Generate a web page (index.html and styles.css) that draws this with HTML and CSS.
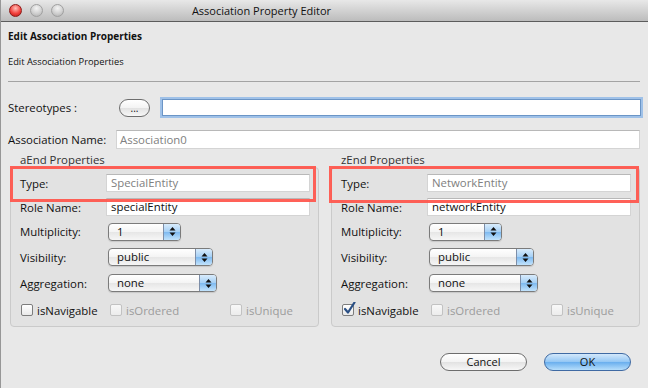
FILE: index.html
```html
<!DOCTYPE html>
<html lang="en">
<head>
    <meta charset="UTF-8">
    <meta name="viewport" content="width=device-width, initial-scale=1.0">
    <title>Association Property Editor</title>
    <link rel="stylesheet" href="styles.css">
</head>
<body>
    <div class="window">
        <div class="titlebar">
            <div class="lights">
                <span class="light close"></span>
                <span class="light"></span>
                <span class="light"></span>
            </div>
            <div class="title">Association Property Editor</div>
        </div>

        <div class="main">
            <div class="head-title">Edit Association Properties</div>
            <div class="head-sub">Edit Association Properties</div>
            <div class="sep"></div>

            <div class="row stereo">
                <label class="lbl-stereo">Stereotypes :</label>
                <button class="btn-dots">...</button>
                <div class="field focus"></div>
            </div>

            <div class="row assoc">
                <label class="lbl-assoc">Association Name:</label>
                <div class="field muted">Association0</div>
            </div>

            <div class="panel-titles">
                <div>aEnd Properties</div>
                <div>zEnd Properties</div>
            </div>

            <div class="panels">
                <!-- aEnd -->
                <div class="panel">
                    <div class="prow">
                        <label>Type:</label>
                        <div class="field pfield muted">SpecialEntity</div>
                    </div>
                    <div class="prow">
                        <label>Role Name:</label>
                        <div class="field pfield">specialEntity</div>
                    </div>
                    <div class="prow mid">
                        <label>Multiplicity:</label>
                        <div class="select w-mult"><span class="val">1</span><span class="arr"><svg width="7" height="11" viewBox="0 0 7 11"><path d="M3.5 1 L6.5 4.5 L0.5 4.5 Z M3.5 10 L6.5 6.5 L0.5 6.5 Z" fill="#111"/></svg></span></div>
                    </div>
                    <div class="prow tall">
                        <label>Visibility:</label>
                        <div class="select w-vis"><span class="val">public</span><span class="arr"><svg width="7" height="11" viewBox="0 0 7 11"><path d="M3.5 1 L6.5 4.5 L0.5 4.5 Z M3.5 10 L6.5 6.5 L0.5 6.5 Z" fill="#111"/></svg></span></div>
                    </div>
                    <div class="prow tall">
                        <label>Aggregation:</label>
                        <div class="select w-agg"><span class="val">none</span><span class="arr"><svg width="7" height="11" viewBox="0 0 7 11"><path d="M3.5 1 L6.5 4.5 L0.5 4.5 Z M3.5 10 L6.5 6.5 L0.5 6.5 Z" fill="#111"/></svg></span></div>
                    </div>
                    <div class="prow checks">
                        <div class="chk c1"><span class="box"></span>isNavigable</div>
                        <div class="chk c2 off"><span class="box"></span>isOrdered</div>
                        <div class="chk off"><span class="box"></span>isUnique</div>
                    </div>
                </div>

                <!-- zEnd -->
                <div class="panel">
                    <div class="prow">
                        <label>Type:</label>
                        <div class="field pfield muted">NetworkEntity</div>
                    </div>
                    <div class="prow">
                        <label>Role Name:</label>
                        <div class="field pfield">networkEntity</div>
                    </div>
                    <div class="prow mid">
                        <label>Multiplicity:</label>
                        <div class="select w-mult"><span class="val">1</span><span class="arr"><svg width="7" height="11" viewBox="0 0 7 11"><path d="M3.5 1 L6.5 4.5 L0.5 4.5 Z M3.5 10 L6.5 6.5 L0.5 6.5 Z" fill="#111"/></svg></span></div>
                    </div>
                    <div class="prow tall">
                        <label>Visibility:</label>
                        <div class="select w-vis"><span class="val">public</span><span class="arr"><svg width="7" height="11" viewBox="0 0 7 11"><path d="M3.5 1 L6.5 4.5 L0.5 4.5 Z M3.5 10 L6.5 6.5 L0.5 6.5 Z" fill="#111"/></svg></span></div>
                    </div>
                    <div class="prow tall">
                        <label>Aggregation:</label>
                        <div class="select w-agg"><span class="val">none</span><span class="arr"><svg width="7" height="11" viewBox="0 0 7 11"><path d="M3.5 1 L6.5 4.5 L0.5 4.5 Z M3.5 10 L6.5 6.5 L0.5 6.5 Z" fill="#111"/></svg></span></div>
                    </div>
                    <div class="prow checks">
                        <div class="chk c1"><span class="box checked"><svg width="14" height="14" viewBox="0 0 14 14"><path d="M3 7 L6 10.5 L12.5 0.5" fill="none" stroke="#2a4f84" stroke-width="2.2" stroke-linecap="round" stroke-linejoin="round"/></svg></span>isNavigable</div>
                        <div class="chk c2 off"><span class="box"></span>isOrdered</div>
                        <div class="chk off"><span class="box"></span>isUnique</div>
                    </div>
                </div>
            </div>

            <div class="actions">
                <button class="btn">Cancel</button>
                <button class="btn btn-ok">OK</button>
            </div>
        </div>

        <!-- highlight annotations -->
        <div class="mark mark-a"></div>
        <div class="mark mark-z"></div>
    </div>
</body>
</html>
```

FILE: styles.css
```css
body {
    margin: 0;
    font-family: "Open Sans", "DejaVu Sans", sans-serif;
    font-size: 11.4px;
    color: #111;
    background-color: #e8e8e8;
}
.window {
    position: relative;
    width: 648px;
    height: 388px;
    box-sizing: border-box;
    border-left: 1px solid #979797;
    background-color: #e8e8e8;
    overflow: hidden;
}
.titlebar {
    display: flex;
    align-items: center;
    height: 21px;
    padding-left: 8px;
    border-bottom: 1px solid #5c5c5c;
    background: linear-gradient(#e8e8e8, #d2d2d2 50%, #bcbcbc);
}
.lights {
    display: flex;
    gap: 8px;
}
.light {
    width: 13px;
    height: 13px;
    box-sizing: border-box;
    border-radius: 50%;
    border: 1px solid #a0a0a0;
    background: radial-gradient(circle at 50% 30%, #f4f4f4, #d0d0d0 55%, #acacac);
}
.light.close {
    border-color: #8d1b18;
    background: radial-gradient(circle at 50% 30%, #ffc0b8, #f2433f 55%, #b5140f);
}
.title {
    width: 395px;
    text-align: center;
    font-size: 11px;
    color: #111;
}
.main {
    padding: 0 7px;
}
.head-title {
    margin-top: 7px;
    height: 14px;
    line-height: 14px;
    font-weight: bold;
    font-size: 10px;
}
.head-sub {
    margin-top: 13px;
    height: 12px;
    line-height: 12px;
    font-size: 9.3px;
}
.sep {
    margin: 13px 1px 0 0;
    height: 1px;
    background-color: #a3a3a3;
}
.row {
    display: flex;
    align-items: center;
}
.stereo {
    margin-top: 15px;
    height: 21px;
}
.lbl-stereo {
    width: 111px;
}
.btn-dots {
    width: 31px;
    height: 18px;
    padding: 0;
    border: 1px solid #6d6d6d;
    border-radius: 9px;
    background: linear-gradient(#fff, #f3f3f3 50%, #e2e2e2 51%, #f7f7f7);
    font-family: inherit;
    font-size: 10px;
    line-height: 10px;
    color: #111;
}
.field {
    box-sizing: border-box;
    height: 19px;
    padding: 0 3px;
    line-height: 17px;
    background-color: #fff;
    border: 1px solid #d4d4d4;
    border-top-color: #b8b8b8;
    white-space: nowrap;
}
.field.focus {
    flex: 1;
    margin-left: 12px;
    height: 17px;
    border: 1px solid #6b95c6;
    box-shadow: 0 0 0 2px #9fc1e8;
}
.assoc {
    margin-top: 12px;
    height: 19px;
}
.lbl-assoc {
    width: 108px;
}
.assoc .field {
    flex: 1;
    margin-right: 1px;
}
.muted {
    color: #808080;
}
.panel-titles,
.panels {
    display: grid;
    grid-template-columns: 309px 309px;
    column-gap: 12px;
    margin-left: 2px;
}
.panel-titles {
    height: 18px;
    line-height: 18px;
    padding-top: 2px;
    box-sizing: border-box;
    color: #333;
}
.panel-titles div {
    padding-left: 10px;
}
.panel {
    padding: 3px 0 2px 9px;
    border: 1px solid #cacaca;
    border-radius: 4px;
    background-color: #e2e2e2;
}
.prow {
    display: flex;
    align-items: center;
    height: 24px;
}
.prow.mid {
    height: 25px;
}
.prow.tall {
    height: 26px;
}
.prow.checks {
    height: 28px;
}
.prow label {
    width: 86px;
    flex: none;
}
.pfield {
    width: 204px;
    height: 18px;
    padding: 0 4px;
    line-height: 16px;
}
.select {
    display: flex;
    box-sizing: border-box;
    height: 18px;
    margin-left: 2px;
    border: 1px solid #7b7b7b;
    border-radius: 4px;
    background: linear-gradient(#fff, #f4f4f4 50%, #e6e6e6 51%, #f6f6f6);
    box-shadow: 0 1px 1px rgba(0, 0, 0, 0.12);
}
.select .val {
    flex: 1;
    padding-left: 8px;
    line-height: 16px;
}
.select .arr {
    display: flex;
    align-items: center;
    justify-content: center;
    width: 16px;
    border-left: 1px solid #7d8ea8;
    border-radius: 0 3px 3px 0;
    background: linear-gradient(#d9ecfc, #a4cff5 50%, #7db9f0 51%, #c2e3fc);
}
.w-mult { width: 73px; }
.w-vis { width: 105px; }
.w-agg { width: 109px; }
.checks {
    padding-left: 1px;
}
.chk {
    display: flex;
    align-items: center;
    gap: 4px;
    white-space: nowrap;
}
.c1 { width: 89px; }
.c2 { width: 120px; }
.box {
    position: relative;
    box-sizing: border-box;
    width: 12px;
    height: 12px;
    border: 1px solid #7d7d7d;
    border-radius: 2px;
    background: linear-gradient(#fff, #e9e9e9);
}
.box svg {
    position: absolute;
    left: -1px;
    top: -3px;
}
.off {
    color: #9c9c9c;
}
.off .box {
    border-color: #c2c2c2;
    background: linear-gradient(#f8f8f8, #ececec);
}
.actions {
    display: flex;
    justify-content: flex-end;
    gap: 17px;
    margin: 26px 10px 0 0;
}
.btn {
    width: 87px;
    height: 18px;
    padding: 0;
    border: 1px solid #6d6d6d;
    border-radius: 9px;
    background: linear-gradient(#fff, #f3f3f3 50%, #e2e2e2 51%, #f7f7f7);
    font-family: inherit;
    font-size: 11px;
    line-height: 16px;
    color: #111;
}
.btn-ok {
    border-color: #3f6aa3;
    background: linear-gradient(#d3e8fb, #92c6f4 50%, #69aeee 51%, #b6defb);
}
.mark {
    position: absolute;
    box-sizing: border-box;
    border: 3px solid rgba(255, 84, 74, 0.92);
}
.mark-a {
    left: 9px;
    top: 166px;
    width: 306px;
    height: 36px;
}
.mark-z {
    left: 328px;
    top: 166px;
    width: 310px;
    height: 37px;
}
```
